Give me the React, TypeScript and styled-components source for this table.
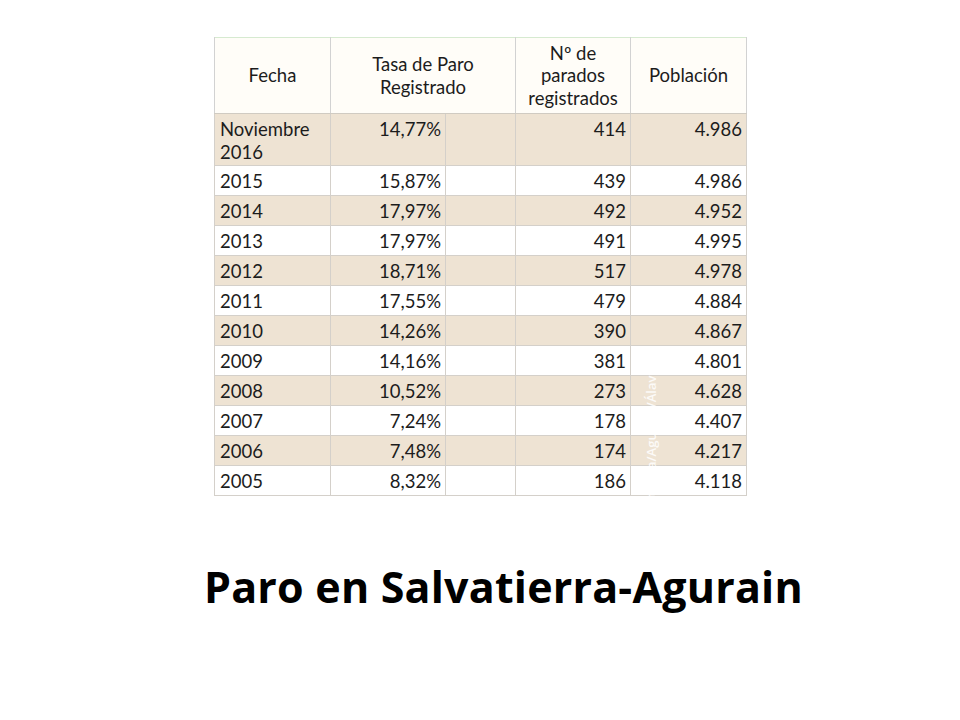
import React from "react";
import styled, { createGlobalStyle } from "styled-components";

const Global = createGlobalStyle`
  html, body { margin: 0; padding: 0; background: #ffffff; }
  body { font-family: "Lato", "Liberation Sans", sans-serif; }
`;

const Slide = styled.div`
  position: relative;
  width: 960px;
  height: 720px;
  background: #ffffff;
  display: flex;
  flex-direction: column;
  padding: 37px 0 0 214px;
  box-sizing: border-box;
`;

const Table = styled.table`
  border-collapse: collapse;
  table-layout: fixed;
  width: 532px;
  font-family: "Lato", sans-serif;
  font-size: 18.5px;
  line-height: 22.5px;
  color: #1c1c1c;
  font-variant-ligatures: none;
`;

const HeadRow = styled.tr`
  background: #fffdf8;
  border-top: 1px solid #d6ead0;
`;

const Th = styled.th`
  font-weight: 400;
  text-align: center;
  vertical-align: middle;
  height: 75px;
  padding: 0 4px;
  border-left: 1px solid #d2d2d2;
  border-right: 1px solid #d2d2d2;
  border-bottom: 1px solid #d0cbc2;
`;

const Row = styled.tr<{ $shade: boolean }>`
  background: ${(p) => (p.$shade ? "#eee3d3" : "#ffffff")};
`;

const Td = styled.td<{ $align?: "left" | "right"; $tall?: boolean }>`
  text-align: ${(p) => p.$align ?? "right"};
  vertical-align: top;
  height: ${(p) => (p.$tall ? "52px" : "30px")};
  padding: 4px 4px 0 5px;
  box-sizing: border-box;
  border: 1px solid #d4d0ca;
  white-space: pre-line;
`;

const Title = styled.h1`
  margin: 65px 0 0 -10px;
  font-family: "Open Sans", sans-serif;
  font-weight: 700;
  font-size: 43px;
  line-height: 52px;
  color: #000000;
  letter-spacing: 0.2px;
  font-variant-ligatures: none;
  white-space: nowrap;
`;

const Watermark = styled.div`
  position: absolute;
  left: 651px;
  top: 368px;
  transform-origin: 0 0;
  transform: rotate(-90deg) translateX(-100%);
  font-family: "Open Sans", sans-serif;
  font-weight: 600;
  font-size: 13px;
  color: rgba(255, 255, 255, 0.85);
  white-space: nowrap;
  line-height: 16px;
  margin-left: -8px;
`;

const rows: [string, string, string, string][] = [
  ["Noviembre\n2016", "14,77%", "414", "4.986"],
  ["2015", "15,87%", "439", "4.986"],
  ["2014", "17,97%", "492", "4.952"],
  ["2013", "17,97%", "491", "4.995"],
  ["2012", "18,71%", "517", "4.978"],
  ["2011", "17,55%", "479", "4.884"],
  ["2010", "14,26%", "390", "4.867"],
  ["2009", "14,16%", "381", "4.801"],
  ["2008", "10,52%", "273", "4.628"],
  ["2007", "7,24%", "178", "4.407"],
  ["2006", "7,48%", "174", "4.217"],
  ["2005", "8,32%", "186", "4.118"],
];

export default function App() {
  return (
    <>
      <Global />
      <Slide>
        <Table>
          <colgroup>
            <col style={{ width: 116 }} />
            <col style={{ width: 115 }} />
            <col style={{ width: 70 }} />
            <col style={{ width: 115 }} />
            <col style={{ width: 116 }} />
          </colgroup>
          <thead>
            <HeadRow>
              <Th>Fecha</Th>
              <Th colSpan={2}>
                Tasa de Paro
                <br />
                Registrado
              </Th>
              <Th>
                Nº de
                <br />
                parados
                <br />
                registrados
              </Th>
              <Th>Población</Th>
            </HeadRow>
          </thead>
          <tbody>
            {rows.map((r, i) => (
              <Row key={i} $shade={i % 2 === 0}>
                <Td $align="left" $tall={i === 0}>
                  {r[0]}
                </Td>
                <Td $tall={i === 0}>{r[1]}</Td>
                <Td $tall={i === 0}></Td>
                <Td $tall={i === 0}>{r[2]}</Td>
                <Td $tall={i === 0}>{r[3]}</Td>
              </Row>
            ))}
          </tbody>
        </Table>
        <Title>Paro en Salvatierra-Agurain</Title>
        <Watermark>Salvatierra/Agurain/Álava</Watermark>
      </Slide>
    </>
  );
}
